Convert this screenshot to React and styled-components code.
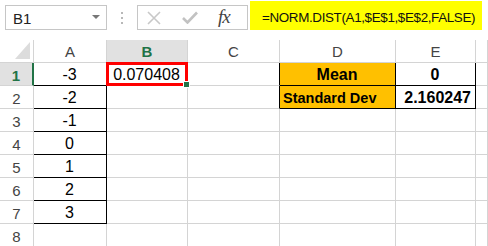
import React from 'react';
import styled, { createGlobalStyle } from 'styled-components';

const GlobalStyle = createGlobalStyle`
    body {
        margin: 0;
        background: #fff;
        font-family: "Liberation Sans", Arial, sans-serif;
    }
`;

const columns = [
    { key: 'A', width: 73 },
    { key: 'B', width: 81 },
    { key: 'C', width: 92 },
    { key: 'D', width: 116 },
    { key: 'E', width: 80 },
    { key: 'F', width: 12 },
];

const rows = [
    { n: 1, A: '-3', B: '0.070408', D: 'Mean', E: '0' },
    { n: 2, A: '-2', D: 'Standard Dev', E: '2.160247' },
    { n: 3, A: '-1' },
    { n: 4, A: '0' },
    { n: 5, A: '1' },
    { n: 6, A: '2' },
    { n: 7, A: '3' },
    { n: 8 },
];

const GRID = '#d4d4d4';
const BLACK = '#000';

// 셀 스타일 정하기
const cellStyle = (row, col) => {
    const s = { $right: GRID, $bottom: GRID, $align: 'center' };
    if (col === 'A' && row.n <= 7) {
        s.$right = BLACK;
        s.$bottom = BLACK;
    }
    if (col === 'C' && row.n <= 2) s.$right = BLACK;
    if ((col === 'D' || col === 'E') && row.n <= 2) {
        s.$right = BLACK;
        s.$bottom = BLACK;
        s.$bold = true;
    }
    if (col === 'D' && row.n <= 2) s.$bg = '#ffc000';
    if (col === 'D' && row.n === 2) {
        s.$align = 'flex-start';
        s.$size = 14.5;
    }
    if (col === 'E' && row.n === 2) s.$align = 'flex-end';
    if (col === 'B' && row.n === 1) s.$selected = true;
    return s;
};

const App = () => {
    return (
        <React.Fragment>
            <GlobalStyle />
            <Toolbar>
                <NameBox>
                    <span>B1</span>
                    <DropArrow />
                </NameBox>
                <Grip>
                    <i /><i /><i />
                </Grip>
                <FxBox>
                    <svg width="14" height="14" viewBox="0 0 14 14">
                        <path d="M1 1 L13 13 M13 1 L1 13" stroke="#c8c8c8" strokeWidth="1.6" fill="none" />
                    </svg>
                    <svg width="16" height="13" viewBox="0 0 16 13">
                        <path d="M1 7 L5.5 11.5 L15 1.5" stroke="#c2c2c2" strokeWidth="2.6" fill="none" />
                    </svg>
                    <Fx>fx</Fx>
                </FxBox>
                <Formula>=NORM.DIST(A1,$E$1,$E$2,FALSE)</Formula>
            </Toolbar>

            <Sheet>
                <Corner />
                {columns.map((c) => (
                    <HeadCell key={c.key} $active={c.key === 'B'}>
                        {c.key === 'F' ? '' : c.key}
                    </HeadCell>
                ))}
                {rows.map((row) => (
                    <React.Fragment key={row.n}>
                        <RowHead $active={row.n === 1}>{row.n}</RowHead>
                        {columns.map((c) => (
                            <Cell key={c.key} {...cellStyle(row, c.key)}>
                                {row[c.key] || ''}
                            </Cell>
                        ))}
                    </React.Fragment>
                ))}
            </Sheet>
        </React.Fragment>
    );
};

const Toolbar = styled.div`
    display: flex;
    align-items: flex-start;
    height: 40px;
    padding-left: 5px;
`;

const NameBox = styled.div`
    box-sizing: border-box;
    width: 102px;
    height: 25px;
    margin-top: 5px;
    border: 1px solid #c6c6c6;
    display: flex;
    align-items: center;
    justify-content: space-between;
    padding: 1px 6px 0 7px;
    font-size: 15px;
    color: #222;
`;

const DropArrow = styled.span`
    width: 0;
    height: 0;
    border-left: 4px solid transparent;
    border-right: 4px solid transparent;
    border-top: 4px solid #777;
    margin-bottom: 2px;
`;

const Grip = styled.div`
    width: 30px;
    height: 25px;
    margin-top: 5px;
    display: flex;
    flex-direction: column;
    align-items: center;
    justify-content: center;
    gap: 3px;
    i {
        width: 2px;
        height: 2px;
        background: #b8b8b8;
    }
`;

const FxBox = styled.div`
    box-sizing: border-box;
    width: 111px;
    height: 25px;
    margin-top: 5px;
    border: 1px solid #c6c6c6;
    display: flex;
    align-items: center;
    padding: 0 0 0 9px;
    svg:first-child {
        margin-right: 21px;
    }
    svg:nth-child(2) {
        margin-right: 20px;
    }
`;

const Fx = styled.span`
    font-family: "Liberation Serif", "Times New Roman", serif;
    font-style: italic;
    font-size: 19px;
    color: #444;
    letter-spacing: -1px;
    margin-top: -2px;
`;

const Formula = styled.div`
    box-sizing: border-box;
    width: 232px;
    height: 29px;
    margin-top: 1px;
    margin-left: 2px;
    background: #ffff00;
    padding: 9px 0 0 12px;
    font-size: 13.4px;
    letter-spacing: -0.35px;
    color: #111;
    white-space: nowrap;
`;

const Sheet = styled.div`
    display: grid;
    grid-template-columns: 34px ${columns.map((c) => c.width + 'px').join(' ')};
    grid-auto-rows: 23px;
    overflow: hidden;
`;

const Corner = styled.div`
    box-sizing: border-box;
    position: relative;
    border-right: 1px solid ${GRID};
    border-bottom: 1px solid ${GRID};
    &::after {
        content: '';
        position: absolute;
        right: 3px;
        bottom: 3px;
        width: 15px;
        height: 17px;
        background: #dcdcdc;
        clip-path: polygon(100% 0, 100% 100%, 0 100%);
    }
`;

const HeadCell = styled.div`
    box-sizing: border-box;
    display: flex;
    align-items: center;
    justify-content: center;
    border-right: 1px solid ${GRID};
    border-bottom: 1px solid ${(p) => (p.$active ? '#c6c6c6' : GRID)};
    background: ${(p) => (p.$active ? '#e1e1e1' : '#fff')};
    color: ${(p) => (p.$active ? '#217346' : '#444')};
    font-weight: ${(p) => (p.$active ? 700 : 400)};
    font-size: 15px;
    padding-top: 1px;
`;

const RowHead = styled.div`
    box-sizing: border-box;
    display: flex;
    align-items: center;
    justify-content: center;
    border-right: ${(p) => (p.$active ? '2px solid #217346' : `1px solid ${GRID}`)};
    border-bottom: 1px solid ${GRID};
    background: ${(p) => (p.$active ? '#e1e1e1' : '#fff')};
    color: ${(p) => (p.$active ? '#217346' : '#444')};
    font-weight: ${(p) => (p.$active ? 700 : 400)};
    font-size: 15px;
    padding-top: 2px;
`;

const Cell = styled.div`
    box-sizing: border-box;
    display: flex;
    align-items: center;
    justify-content: ${(p) => p.$align};
    padding: 2px 4px 0 3px;
    border-right: 1px solid ${(p) => p.$right};
    border-bottom: 1px solid ${(p) => p.$bottom};
    background: ${(p) => p.$bg || '#fff'};
    font-size: ${(p) => p.$size || 16}px;
    font-weight: ${(p) => (p.$bold ? 700 : 400)};
    color: #000;
    white-space: nowrap;
    position: ${(p) => (p.$selected ? 'relative' : 'static')};
    z-index: ${(p) => (p.$selected ? 1 : 'auto')};
    &::after {
        content: ${(p) => (p.$selected ? "''" : 'none')};
        position: absolute;
        inset: -1px -1px -1px -1px;
        border: 3px solid #ff0000;
    }
    &::before {
        content: ${(p) => (p.$selected ? "''" : 'none')};
        position: absolute;
        right: -3px;
        bottom: -3px;
        width: 5px;
        height: 5px;
        background: #217346;
        border: 1px solid #fff;
        z-index: 2;
    }
`;

export default App;
